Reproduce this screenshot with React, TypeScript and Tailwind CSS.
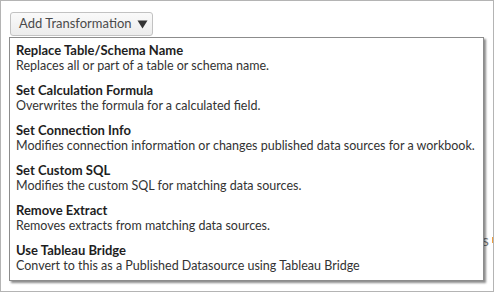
const items = [
  {
    title: "Replace Table/Schema Name",
    description: "Replaces all or part of a table or schema name.",
  },
  {
    title: "Set Calculation Formula",
    description: "Overwrites the formula for a calculated field.",
  },
  {
    title: "Set Connection Info",
    description:
      "Modifies connection information or changes published data sources for a workbook.",
  },
  {
    title: "Set Custom SQL",
    description: "Modifies the custom SQL for matching data sources.",
  },
  {
    title: "Remove Extract",
    description: "Removes extracts from matching data sources.",
  },
  {
    title: "Use Tableau Bridge",
    description:
      "Convert to this as a Published Datasource using Tableau Bridge",
  },
];

export default function App() {
  return (
    <div className="relative h-[292px] w-[494px] overflow-hidden border border-[#b4b4b4] bg-white font-['Lato',sans-serif]">
      <div className="pl-[9px] pt-[11px]">
        <button className="flex h-[24px] w-[143px] items-center gap-[5px] rounded-[3px] border border-[#c2c2c2] bg-gradient-to-b from-[#fafafa] to-[#ececec] pl-[8px] text-[13px] text-[#4a4a4a]">
          <span>Add Transformation</span>
          <svg width="11" height="9" viewBox="0 0 11 9" className="mt-[1px]">
            <path d="M0.5 0.5 H10.5 L5.5 8.5 Z" fill="#333" />
          </svg>
        </button>
      </div>

      {/* text behind the open menu */}
      <div className="absolute left-[481px] top-[231px] flex items-center gap-[3px] text-[16px] leading-none text-[#7a7a7a]">
        <span>s</span>
        <span className="h-[6px] w-[2px] bg-[#f0a040]" />
      </div>

      <div className="absolute left-[8px] top-[36px] flex h-[244px] w-[475px] flex-col gap-[8px] border border-[#8c8c8c] bg-white px-[6px] pb-[5px] pt-[4px] shadow-[2px_2px_2px_rgba(0,0,0,0.45)]">
        {items.map((item) => (
          <div key={item.title} className="flex flex-col">
            <span className="h-[16px] text-[13px] font-bold leading-[16px] text-[#1e1e1e]">
              {item.title}
            </span>
            <span className="h-[16px] whitespace-nowrap text-[12.5px] leading-[16px] text-[#333]">
              {item.description}
            </span>
          </div>
        ))}
      </div>
    </div>
  );
}
